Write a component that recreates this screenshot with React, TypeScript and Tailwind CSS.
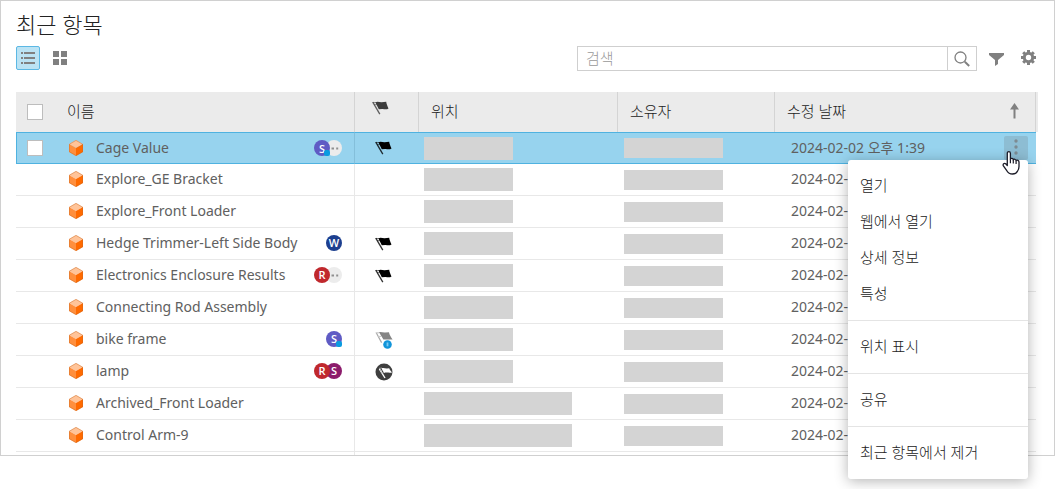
import React from "react";

type BadgeKind = "s" | "sDark" | "w" | "r" | "more";
type FlagKind = "flag" | "shared" | "round";

interface Item {
  name: string;
  badges?: BadgeKind[];
  flag?: FlagKind;
  wide?: boolean;
  date: string;
  selected?: boolean;
}

const items: Item[] = [
  { name: "Cage Value", badges: ["s", "more"], flag: "flag", date: "2024-02-02 오후 1:39", selected: true },
  { name: "Explore_GE Bracket", date: "2024-02-" },
  { name: "Explore_Front Loader", date: "2024-02-" },
  { name: "Hedge Trimmer-Left Side Body", badges: ["w"], flag: "flag", date: "2024-02-" },
  { name: "Electronics Enclosure Results", badges: ["r", "more"], flag: "flag", date: "2024-02-" },
  { name: "Connecting Rod Assembly", date: "2024-02-" },
  { name: "bike frame", badges: ["s"], flag: "shared", date: "2024-02-" },
  { name: "lamp", badges: ["r", "sDark"], flag: "round", date: "2024-02-" },
  { name: "Archived_Front Loader", wide: true, date: "2024-02-" },
  { name: "Control Arm-9", wide: true, date: "2024-02-" },
];

const menuGroups = [["열기", "웹에서 열기", "상세 정보", "특성"], ["위치 표시"], ["공유"], ["최근 항목에서 제거"]];

function Cube() {
  return (
    <svg className="h-4 w-[14px] shrink-0" viewBox="0 0 14 16" aria-hidden="true">
      <path d="M7 0 14 4 7 8 0 4Z" fill="#ffc499" />
      <path d="M0 4 7 8V16L0 12Z" fill="#ff8f3d" />
      <path d="M14 4 7 8V16L14 12Z" fill="#ff6a00" />
      <path d="M7 .4 13.6 4.2V11.8L7 15.6.4 11.8V4.2Z" fill="none" stroke="#c96a25" strokeOpacity=".55" strokeWidth=".8" />
    </svg>
  );
}

function Flag({ className }: { className: string }) {
  return (
    <svg className={className} viewBox="0 0 17 14" aria-hidden="true">
      <path d="M3.400 1.400C5.500 0 7.600 1.400 9.600 1.300L14.200 .8C14.500 3 15.400 5 16.500 7.500 14 9.200 12 7.800 10.200 8L6.800 8.200Z" fill="currentColor" />
      <path d="M.8 1.200 7.800 13.200" stroke="currentColor" strokeWidth="1.300" opacity=".8" />
      <path d="M.6 1.500H4.600M2.400 3.600H5" stroke="currentColor" strokeWidth=".9" opacity=".55" />
    </svg>
  );
}

function SharedFlag() {
  return (
    <svg className="h-[18px] w-[18px]" viewBox="0 0 18 18" aria-hidden="true">
      <path d="M4 1.200C6 .6 8 1.800 10 1.600L14 1.200C14.200 3.600 16 6 17.600 8.600L8.400 8.400Z" fill="#858585" />
      <path d="M1.400 2 6.600 11.600" stroke="#aaa" strokeWidth="1.200" />
      <path d="M.6 1.800H4M3 5.400H6" stroke="#c4c4c4" />
      <circle cx="12.500" cy="13.500" r="4.300" fill="#1295da" />
      <path d="M12.500 11.500V15.300" stroke="#7bcaf3" strokeWidth="1.800" />
    </svg>
  );
}

function RoundFlag() {
  return (
    <svg className="h-[18px] w-[18px]" viewBox="0 0 18 18" aria-hidden="true">
      <circle cx="9" cy="9" r="8.500" fill="#3f3f3f" />
      <path d="M6.500 5.400C8.500 4.200 10 5.600 12 5.400L14.200 5.200C14.600 6.600 15.600 7.600 17 9.400 14 10.200 11.400 8.800 9 10Z" fill="#fff" />
      <path d="M4.400 5.800 10 15" stroke="#fff" strokeWidth="1.400" />
      <path d="M4 5.400 7 5M4.500 7.500H7.500M6 9.800H8.500" stroke="#aaa" strokeWidth=".8" />
    </svg>
  );
}

function FlagMark({ kind }: { kind?: FlagKind }) {
  if (kind === "shared") return <SharedFlag />;
  if (kind === "round") return <RoundFlag />;
  if (kind === "flag") return <Flag className="h-[14px] w-[17px] text-black" />;
  return null;
}

const badgeStyle: Record<BadgeKind, string> = {
  s: "bg-[#5f5bc4]",
  sDark: "bg-[#8c1c6c]",
  w: "bg-[#1c3f8f]",
  r: "bg-[#c0282d]",
  more: "bg-[#ececec]",
};

const badgeText: Record<BadgeKind, string> = { s: "S", sDark: "S", w: "W", r: "R", more: "" };

function Badge({ kind, front }: { kind: BadgeKind; front: boolean }) {
  return (
    <span
      className={`relative flex size-4 items-center justify-center rounded-full font-['Open_Sans',sans-serif] text-[11px] leading-none font-semibold text-white ${badgeStyle[kind]} ${front ? "z-[1]" : "-ml-1"}`}
    >
      {badgeText[kind]}
      {kind === "s" && <span className="absolute right-0 bottom-0 size-[6px] rounded-[2px] bg-[#0a9be0]" />}
      {kind === "more" && (
        <svg className="size-4" viewBox="0 0 16 16" aria-hidden="true">
          <path d="M5.500 8.500H8M10.200 8.500H12.200" stroke="#8f8f8f" strokeWidth="2" />
        </svg>
      )}
    </span>
  );
}

function CheckBox({ label }: { label: string }) {
  return (
    <input
      type="checkbox"
      aria-label={label}
      className="block size-4 appearance-none border border-[#bdbdbd] bg-white checked:bg-[#38abdf]"
    />
  );
}

function HandCursor() {
  return (
    <svg className="pointer-events-none absolute top-[14px] left-[-2px] z-20 h-[26px] w-[20px]" viewBox="0 0 20 26" aria-hidden="true">
      <path
        d="M5.3 3.2c0-2.2 3.1-2.2 3.1 0v6.1c.5-1.3 2.7-1.1 2.9.5.7-1 2.6-.7 2.8.8.9-.9 2.9-.4 2.9 1.3v4.6c0 2-.5 3.2-1.4 4.5-1 2.1-2.3 3-5 3-3 0-4.600-1.100-5.800-3.300L1.400 15.900c-.9-1.700.8-3.200 2.300-2.100l1.600 1.700Z"
        fill="#fff"
        stroke="#1c1c28"
        strokeWidth="1.300"
        strokeLinejoin="round"
      />
      <path d="M8.400 9.300v4M11.300 10v3.500M14.100 11v3" stroke="#1c1c28" strokeWidth="1.200" />
    </svg>
  );
}

function ContextMenu() {
  return (
    <div role="menu" className="absolute top-full right-0 z-10 w-[180px] rounded-[3px] bg-white text-[15px] font-light text-[#222] shadow-[0_2px_14px_rgba(0,0,0,0.3)]">
      {menuGroups.map((group, i) => (
        <div key={i} className={i > 0 ? "border-t border-[#e4e4e4] pt-[7px] pb-[9px]" : "pt-[7px] pb-[9px]"}>
          {group.map((label) => (
            <button key={label} type="button" role="menuitem" className="flex h-9 w-full items-center px-3 text-left">
              {label}
            </button>
          ))}
        </div>
      ))}
    </div>
  );
}

function Row({ item }: { item: Item }) {
  const line = item.selected ? "border-y border-[#4fb2e0] bg-[#97d3ee]" : "border-b border-[#e8e8e8]";
  const divider = item.selected ? "border-r border-r-[#84bfda]" : "border-r";
  const lift = item.selected ? "" : "pb-[2px]";
  return (
    <tr>
      <td className={`h-8 ${line} ${item.selected ? "border-l pl-[10px]" : ""}`}>
        {item.selected && <CheckBox label={item.name} />}
      </td>
      <td className={`h-8 ${line} ${divider} ${lift}`}>
        <div className="flex items-center pr-3 pl-[13px]">
          <Cube />
          <span className="ml-[13px] whitespace-nowrap">{item.name}</span>
          <span className="ml-auto flex">
            {item.badges?.map((kind, i) => <Badge key={i} kind={kind} front={i === 0} />)}
          </span>
        </div>
      </td>
      <td className={`h-8 pl-5 ${line}`}>
        <FlagMark kind={item.flag} />
      </td>
      <td className={`h-8 pl-[5px] ${line}`}>
        <div className={`h-[23px] bg-[#d4d4d4] ${item.wide ? "w-[148px]" : "w-[89px]"}`} />
      </td>
      <td className={`h-8 pl-[6px] ${line}`}>
        <div className="h-5 w-[99px] bg-[#d4d4d4]" />
      </td>
      <td className={`h-8 pr-2 pl-4 ${line} ${lift}`}>
        <div className="flex items-center justify-between whitespace-nowrap">
          <span>{item.date}</span>
          {item.selected && (
            <div className="relative">
              <button type="button" aria-label="추가 옵션" className="flex size-6 items-center justify-center rounded-[2px] bg-[#8dbdd3]">
                <svg className="h-5 w-1" viewBox="0 0 4 20" fill="#7d8b92" aria-hidden="true">
                  <circle cx="2" cy="3" r="1.700" />
                  <circle cx="2" cy="9" r="1.700" />
                  <circle cx="2" cy="15" r="1.700" />
                </svg>
              </button>
              <ContextMenu />
              <HandCursor />
            </div>
          )}
        </div>
      </td>
      <td />
    </tr>
  );
}

export default function App() {
  const th = "h-10 border-r border-[#d4d4d4] bg-[#ebebeb] text-left text-[15px] font-light text-[#222]";
  const label = "pb-[2px]";
  return (
    <div className="min-h-screen bg-white pb-8 font-['Noto_Sans','Noto_Sans_CJK_KR',sans-serif] text-[#606060]">
      <main className="border border-[#d0d0d0] bg-white pr-4 pl-[15px]">
        <h1 className="pt-[7px] text-[22px] leading-8 font-light text-[#222]">최근 항목</h1>

        <div className="mt-[6px] flex items-center">
          <button type="button" aria-label="목록 보기" className="flex size-6 items-center justify-center self-start rounded-[2px] border border-[#5cb8e4] bg-[#bbe3f4]">
            <svg className="h-3 w-[14px]" viewBox="0 0 14 12" fill="#808080" aria-hidden="true">
              <path d="M0 0H2V2H0ZM3 0H14V2H3ZM0 5H2V7H0ZM3 5H14V7H3ZM0 10H2V12H0ZM3 10H14V12H3Z" />
            </svg>
          </button>
          <button type="button" aria-label="격자 보기" className="ml-2 flex size-6 items-center justify-center self-start">
            <svg className="size-[14px]" viewBox="0 0 14 14" fill="#808080" aria-hidden="true">
              <path d="M0 0H6V6H0ZM8 0H14V6H8ZM0 8H6V14H0ZM8 8H14V14H8Z" />
            </svg>
          </button>
          <div className="ml-auto flex h-[25px] w-[400px] border border-[#cfcfcf]">
            <input type="text" aria-label="검색" placeholder="검색" className="min-w-0 flex-1 px-2 text-[15px] font-light outline-none placeholder:text-[#999]" />
            <button type="button" aria-label="검색 실행" className="flex w-[29px] items-center justify-center border-l border-[#cfcfcf]">
              <svg className="size-4" viewBox="0 0 16 16" fill="none" stroke="#808080" aria-hidden="true">
                <circle cx="6.500" cy="6.500" r="5.500" strokeWidth="1.300" />
                <path d="M10.800 10.800 15.200 15" strokeWidth="2" />
              </svg>
            </button>
          </div>
          <button type="button" aria-label="필터" className="ml-3">
            <svg className="h-[14px] w-[15px]" viewBox="0 0 15 14" fill="#808080" aria-hidden="true">
              <path d="M0 1H15V3L9 8V12L6 14V8L0 3Z" />
            </svg>
          </button>
          <button type="button" aria-label="설정" className="mr-[2px] ml-[17px] self-start pt-1">
            <svg className="size-[15px]" viewBox="0 0 15 15" aria-hidden="true">
              <path d="M7.500 0V15M0 7.500H15M2.200 2.200 12.800 12.800M12.800 2.200 2.200 12.800" stroke="#808080" strokeWidth="3" />
              <circle cx="7.500" cy="7.500" r="4.200" fill="#fff" stroke="#808080" strokeWidth="3" />
            </svg>
          </button>
        </div>

        <table className="mt-[21px] w-full table-fixed border-separate border-spacing-0 text-[14px] leading-5">
          <colgroup>
            <col className="w-10" />
            <col className="w-[299px]" />
            <col className="w-16" />
            <col />
            <col className="w-[157px]" />
            <col className="w-[261px]" />
            <col className="w-[2px]" />
          </colgroup>
          <thead>
            <tr>
              <th className="h-10 bg-[#ebebeb] pl-[11px]"><CheckBox label="모두 선택" /></th>
              <th className={`pl-[11px] ${label} ${th}`}>이름</th>
              <th className={`pb-[9px] pl-[17px] ${th}`} aria-label="상태">
                <Flag className="h-[14px] w-[17px] text-[#3c3c3c]" />
              </th>
              <th className={`pl-3 ${label} ${th}`}>위치</th>
              <th className={`pl-3 ${label} ${th}`}>소유자</th>
              <th className={`pl-3 ${label} ${th}`}>
                <div className="flex items-center justify-between pr-4">
                  수정 날짜
                  <svg className="h-4 w-[9px]" viewBox="0 0 9 16" fill="#808080" aria-hidden="true">
                    <path d="M4.500 0 9 6.500H5.500V15.500H3.500V6.500H0Z" />
                  </svg>
                </div>
              </th>
              <th className="bg-[#ebebeb]" />
            </tr>
          </thead>
          <tbody>
            {items.map((item) => <Row key={item.name} item={item} />)}
            <tr aria-hidden="true">
              <td />
              <td className="h-[3px] border-r border-[#e8e8e8]" />
              <td colSpan={5} />
            </tr>
          </tbody>
        </table>
      </main>
    </div>
  );
}
